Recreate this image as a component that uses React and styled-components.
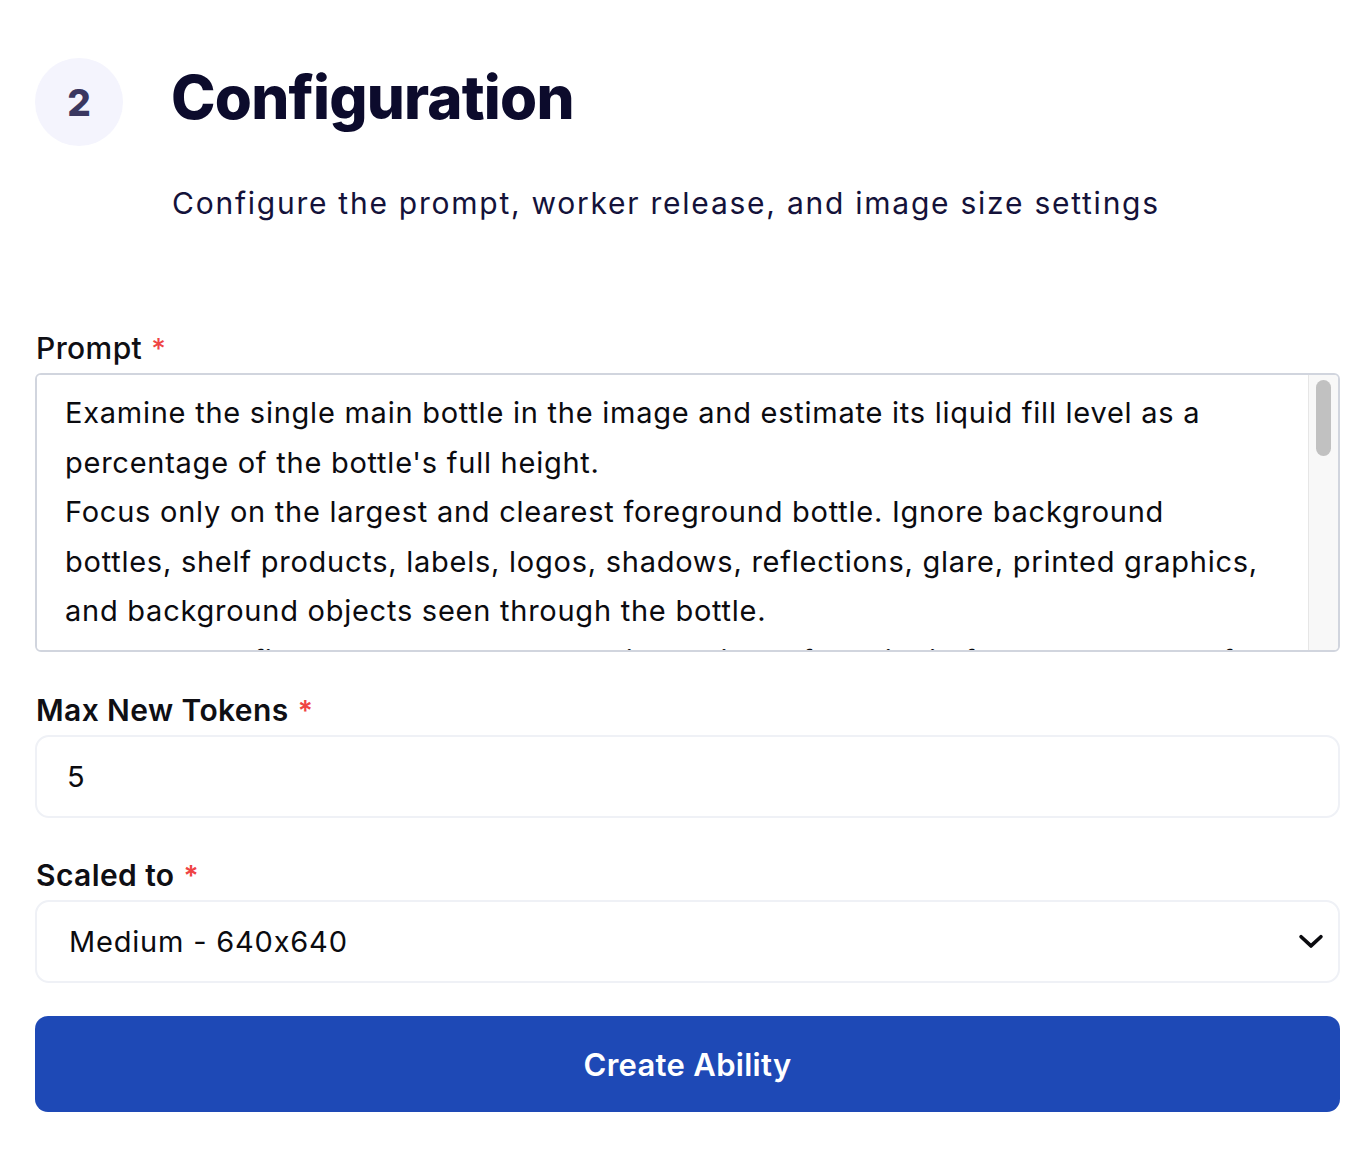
import React from 'react';
import styled, { createGlobalStyle } from 'styled-components';

const GlobalStyle = createGlobalStyle`
  body {
    margin: 0;
    background: #ffffff;
    font-family: Inter, "Liberation Sans", sans-serif;
    font-feature-settings: "calt" 0;
  }
`;

const Page = styled.div`
  padding: 58px 32px 40px 35px;
  display: flex;
  flex-direction: column;
`;

const Header = styled.div`
  display: flex;
  align-items: flex-start;
  gap: 48px;
`;

const StepBadge = styled.div`
  width: 88px;
  height: 88px;
  border-radius: 50%;
  background: #f4f4fd;
  display: flex;
  align-items: center;
  justify-content: center;
  flex-shrink: 0;
  font-size: 37px;
  font-weight: 800;
  color: #3a3760;
`;

const Title = styled.h1`
  margin: 4px 0 0;
  font-size: 60px;
  line-height: 70px;
  font-weight: 800;
  letter-spacing: -0.8px;
  color: #0c0b2c;
`;

const Subtitle = styled.p`
  margin: 37px 0 0 137px;
  font-size: 30px;
  line-height: 40px;
  font-weight: 400;
  color: #14123a;
  letter-spacing: 1.75px;
`;

const Form = styled.form`
  margin-top: 107px;
  display: flex;
  flex-direction: column;
`;

const Field = styled.div`
  display: flex;
  flex-direction: column;
  margin-bottom: ${({ $gap }) => $gap}px;
`;

const Label = styled.label`
  font-size: 30px;
  line-height: 36px;
  font-weight: ${({ $bold }) => ($bold ? 600 : 500)};
  letter-spacing: 0.4px;
  color: #0f0f14;
  margin: 0 0 ${({ $space }) => $space}px 1px;
`;

const Required = styled.span`
  color: #ef4444;
  margin-left: 9px;
  font-size: 28px;
`;

const PromptBox = styled.div`
  box-sizing: border-box;
  height: 279px;
  display: flex;
  border: 2px solid #d1d5de;
  border-radius: 6px;
  overflow: hidden;
`;

const TextArea = styled.textarea`
  flex: 1;
  min-width: 0;
  padding: 13px 30px 0 28px;
  border: none;
  font-family: Inter, "Liberation Sans", sans-serif;
  font-feature-settings: "calt" 0;
  font-size: 29px;
  letter-spacing: 0.75px;
  line-height: 49.5px;
  color: #0b0b0f;
  resize: none;
  outline: none;
  overflow: hidden;
`;

const ScrollTrack = styled.div`
  width: 30px;
  flex-shrink: 0;
  box-sizing: border-box;
  padding: 5px 7px;
  background: #f8f8f8;
  border-left: 1px solid #e6e6e6;
`;

const ScrollThumb = styled.div`
  height: 76px;
  border-radius: 8px;
  background: #c1c1c1;
`;

const Input = styled.input`
  box-sizing: border-box;
  width: 100%;
  height: 83px;
  padding: 0 30px;
  border: 2px solid #eff1f6;
  border-radius: 14px;
  font-family: Inter, "Liberation Sans", sans-serif;
  font-size: 29px;
  color: #0b0b0f;
  outline: none;
`;

const SelectBox = styled.div`
  box-sizing: border-box;
  height: 83px;
  padding: 0 10px 0 32px;
  border: 2px solid #eff1f6;
  border-radius: 14px;
  display: flex;
  align-items: center;
  justify-content: space-between;
  font-size: 29px;
  letter-spacing: 0.8px;
  color: #0b0b0f;
`;

const Chevron = styled.svg`
  width: 34px;
  height: 34px;
  margin-top: -2px;
`;

const SubmitButton = styled.button`
  height: 96px;
  border: none;
  border-radius: 13px;
  background: #1e49b6;
  color: #ffffff;
  font-family: Inter, "Liberation Sans", sans-serif;
  font-size: 31px;
  font-weight: 600;
  letter-spacing: 0.3px;
  cursor: pointer;
`;

const promptText =
  "Examine the single main bottle in the image and estimate its liquid fill level as a percentage of the bottle's full height.\n" +
  'Focus only on the largest and clearest foreground bottle. Ignore background bottles, shelf products, labels, logos, shadows, reflections, glare, printed graphics, and background objects seen through the bottle.\n' +
  'Measure the fill level based on the vertical height of the liquid from the bottom of the bottle to the liquid surface.\n' +
  'Respond with a single integer between 0 and 100 and nothing else.';

const App = () => (
  <>
    <GlobalStyle />
    <Page>
      <Header>
        <StepBadge>2</StepBadge>
        <Title>Configuration</Title>
      </Header>
      <Subtitle>Configure the prompt, worker release, and image size settings</Subtitle>

      <Form onSubmit={(e) => e.preventDefault()}>
        <Field $gap={40}>
          <Label $space={6}>
            Prompt<Required>*</Required>
          </Label>
          <PromptBox>
            <TextArea defaultValue={promptText} />
            <ScrollTrack>
              <ScrollThumb />
            </ScrollTrack>
          </PromptBox>
        </Field>

        <Field $gap={39}>
          <Label $bold $space={6}>
            Max New Tokens<Required>*</Required>
          </Label>
          <Input type="text" defaultValue="5" />
        </Field>

        <Field $gap={33}>
          <Label $bold $space={6}>
            Scaled to<Required>*</Required>
          </Label>
          <SelectBox>
            <span>Medium - 640x640</span>
            <Chevron viewBox="0 0 24 24" fill="none" stroke="#0b0b0f" strokeWidth="2.6" strokeLinecap="round" strokeLinejoin="round">
              <path d="M5 9l7 6.5L19 9" />
            </Chevron>
          </SelectBox>
        </Field>

        <SubmitButton type="submit">Create Ability</SubmitButton>
      </Form>
    </Page>
  </>
);

export default App;
